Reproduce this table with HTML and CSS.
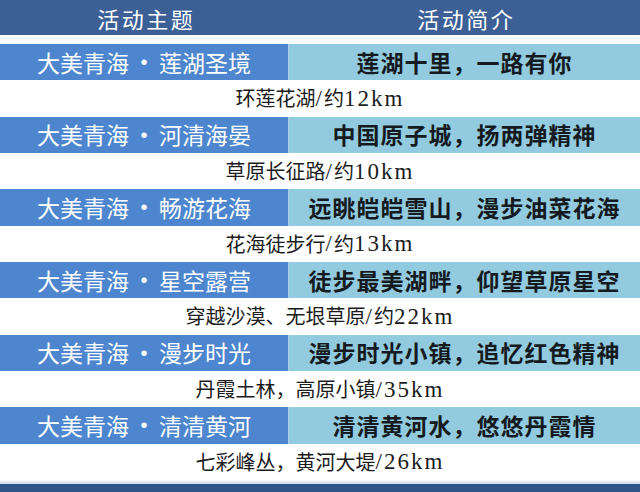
FILE: index.html
```html
<!DOCTYPE html>
<html lang="zh">
<head>
<meta charset="utf-8">
<link rel="stylesheet" href="styles.css">
</head>
<body>
<div class="table">
  <div class="head">
    <div class="hcell">活动主题</div>
    <div class="hcell">活动简介</div>
  </div>
  <div class="gap"></div>
  <div class="row">
    <div class="theme">大美青海<span class="dot">•</span>莲湖圣境</div>
    <div class="intro">莲湖十里，一路有你</div>
  </div>
  <div class="route">环莲花湖<span class="lat">/</span>约<span class="lat">12km</span></div>
  <div class="row">
    <div class="theme">大美青海<span class="dot">•</span>河清海晏</div>
    <div class="intro">中国原子城，扬两弹精神</div>
  </div>
  <div class="route">草原长征路<span class="lat">/</span>约<span class="lat">10km</span></div>
  <div class="row">
    <div class="theme">大美青海<span class="dot">•</span>畅游花海</div>
    <div class="intro">远眺皑皑雪山，漫步油菜花海</div>
  </div>
  <div class="route">花海徒步行<span class="lat">/</span>约<span class="lat">13km</span></div>
  <div class="row">
    <div class="theme">大美青海<span class="dot">•</span>星空露营</div>
    <div class="intro">徒步最美湖畔，仰望草原星空</div>
  </div>
  <div class="route">穿越沙漠、无垠草原<span class="lat">/</span>约<span class="lat">22km</span></div>
  <div class="row">
    <div class="theme">大美青海<span class="dot">•</span>漫步时光</div>
    <div class="intro">漫步时光小镇，追忆红色精神</div>
  </div>
  <div class="route">丹霞土林，高原小镇<span class="lat">/35km</span></div>
  <div class="row">
    <div class="theme">大美青海<span class="dot">•</span>清清黄河</div>
    <div class="intro">清清黄河水，悠悠丹霞情</div>
  </div>
  <div class="route">七彩峰丛，黄河大堤<span class="lat">/26km</span></div>
  <div class="foot"></div>
</div>
</body>
</html>
```
FILE: styles.css
```css
html, body {
  margin: 0;
  padding: 0;
  background: #ffffff;
}
.table {
  width: 640px;
  height: 492px;
  display: flex;
  flex-direction: column;
  overflow: hidden;
}
.head {
  height: 35px;
  background: #3c5f96;
  display: grid;
  grid-template-columns: 290px 1fr;
}
.hcell {
  display: flex;
  align-items: center;
  justify-content: center;
  color: #ffffff;
  font-family: "Noto Sans CJK SC", sans-serif;
  font-size: 22px;
  letter-spacing: 2.5px;
  text-indent: 2.5px;
  line-height: 1;
}
.gap {
  height: 9px;
  background: linear-gradient(#ffffff 0, #ffffff 2px, #e9f0f6 3px, #f6f9fb 5px, #ffffff 9px);
}
.row {
  height: 36.33px;
  display: grid;
  grid-template-columns: 289px 1fr;
}
.theme {
  background: #4d86ce;
  color: #ffffff;
  font-family: "Noto Sans CJK SC", sans-serif;
  font-size: 23px;
  display: flex;
  align-items: center;
  justify-content: center;
  line-height: 1;
  border-right: 1px solid #a9cde6;
}
.dot {
  display: inline-block;
  width: 30px;
  text-align: center;
  font-family: "Liberation Sans", sans-serif;
  font-size: 20px;
}
.intro {
  background: #92cbdf;
  color: #151a20;
  font-family: "Noto Sans CJK SC", sans-serif;
  font-weight: 700;
  font-size: 23px;
  letter-spacing: 1px;
  display: flex;
  align-items: center;
  justify-content: center;
  line-height: 1;
}
.route {
  height: 36.33px;
  background: #ffffff;
  color: #1c1c1c;
  font-family: "Noto Sans CJK SC", sans-serif;
  font-size: 20px;
  display: flex;
  align-items: center;
  justify-content: center;
  line-height: 1;
}
.lat {
  font-family: "Liberation Serif", serif;
  font-size: 23px;
  letter-spacing: 2px;
}
.foot {
  flex: 1;
  background: linear-gradient(#ffffff 0, #dfe8f2 2px, #cfdceb 4px, #2f5487 4px, #2f5487 100%);
}
```
